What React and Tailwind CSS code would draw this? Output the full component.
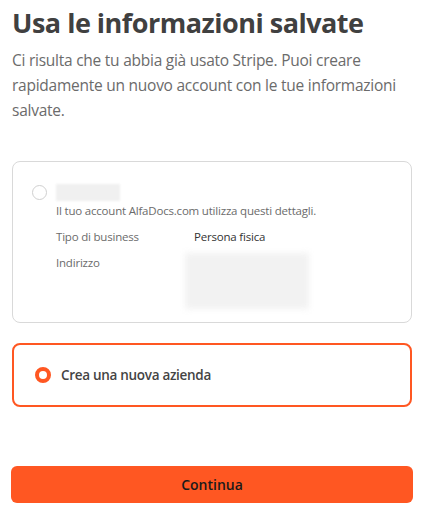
export default function App() {
  const font = { fontFamily: '"Open Sans", "Noto Sans", sans-serif' }

  return (
    <div className="min-h-[519px] bg-white px-3" style={font}>
      {/* Header */}
      <h1 className="pt-[5px] text-[27px] font-bold leading-[36px] tracking-[-0.5px] text-[#404040]">
        Usa le informazioni salvate
      </h1>
      <p className="mt-[7px] text-[15.5px] leading-[25px] tracking-[-0.25px] text-[#6b6b6b]">
        Ci risulta che tu abbia già usato Stripe. Puoi creare rapidamente un nuovo account con le tue informazioni salvate.
      </p>

      {/* Saved account option */}
      <div className="mt-[38px] h-[162px] rounded-lg border border-[#d9d9d9] pl-[19px] pr-4 pt-[22px]">
        <div className="flex items-center gap-[9px]">
          <span className="h-[15px] w-[15px] rounded-full border border-[#d0d0d0]" />
          <div className="h-[17px] w-[64px] bg-[#f0f0f0] blur-[1px]" />
        </div>
        <div className="pl-[24px] text-[11.5px] tracking-[-0.2px] text-[#6b6b6b]">
          <p className="mt-[1px] leading-[18px]">Il tuo account AlfaDocs.com utilizza questi dettagli.</p>
          <div className="mt-[8px] flex leading-[18px]">
            <span className="w-[138px]">Tipo di business</span>
            <span className="text-[#333]">Persona fisica</span>
          </div>
          <div className="mt-[8px] flex leading-[18px]">
            <span className="w-[129px]">Indirizzo</span>
            <div className="-mt-[1px] h-[56px] w-[124px] bg-[#f2f2f2] blur-[3px]" />
          </div>
        </div>
      </div>

      {/* New company option */}
      <div className="mt-[20px] flex h-[64px] items-center gap-[10px] rounded-lg border-2 border-[#ff5722] pl-[21px]">
        <span className="h-[16px] w-[16px] rounded-full border-[4px] border-[#ff5722]" />
        <span className="text-[13.5px] font-semibold tracking-[-0.3px] text-[#444]">Crea una nuova azienda</span>
      </div>

      {/* Submit */}
      <button className="-mx-px mt-[59px] h-[37px] w-[calc(100%+2px)] rounded-md bg-[#ff5722] text-[14px] font-semibold text-[#1a1a1a]">
        Continua
      </button>
    </div>
  )
}
